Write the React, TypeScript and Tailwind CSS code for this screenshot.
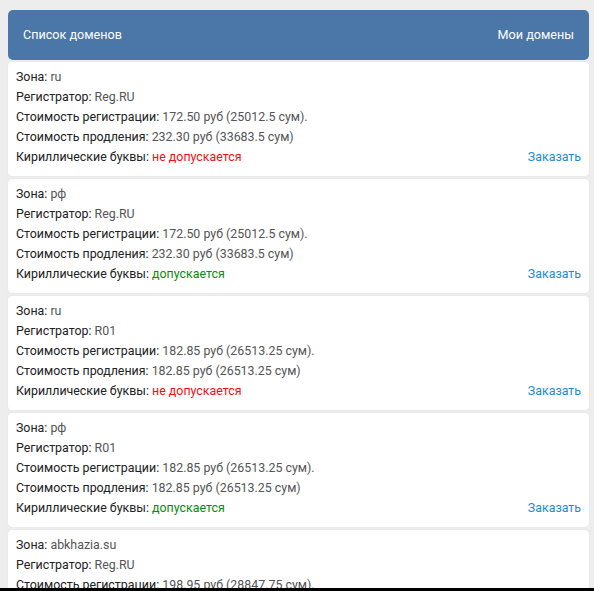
import React from "react";

type Item = { zone: string; reg: string; price: string; renew: string; cyr: boolean };

const items: Item[] = [
  { zone: "ru", reg: "Reg.RU", price: "172.50 руб (25012.5 сум).", renew: "232.30 руб (33683.5 сум)", cyr: false },
  { zone: "рф", reg: "Reg.RU", price: "172.50 руб (25012.5 сум).", renew: "232.30 руб (33683.5 сум)", cyr: true },
  { zone: "ru", reg: "R01", price: "182.85 руб (26513.25 сум).", renew: "182.85 руб (26513.25 сум)", cyr: false },
  { zone: "рф", reg: "R01", price: "182.85 руб (26513.25 сум).", renew: "182.85 руб (26513.25 сум)", cyr: true },
  { zone: "abkhazia.su", reg: "Reg.RU", price: "198.95 руб (28847.75 сум).", renew: "198.95 руб (28847.75 сум)", cyr: false },
];

function Row({ label, children }: { label: string; children: React.ReactNode }) {
  return (
    <div className="h-5 leading-5 whitespace-nowrap">
      <span className="text-[#222]">{label}: </span>
      <span className="text-[#555]">{children}</span>
    </div>
  );
}

export default function App() {
  return (
    <div
      className="bg-[#ededed] pt-[10px] pl-2 pr-[5px] text-[12.4px] overflow-hidden h-[591px]"
      style={{ fontFamily: "Roboto, 'Noto Sans', sans-serif" }}
    >
      <div className="h-[50px] bg-[#4a76a8] rounded-[5px] flex items-center justify-between pl-[15px] pr-[15px] text-[12.6px] text-white">
        <span>Список доменов</span>
        <span>Мои домены</span>
      </div>
      <div className="flex flex-col gap-[3px] mt-[2px]">
        {items.map((it, i) => (
          <div key={i} className="bg-white rounded-[4px] pl-2 pr-2 pt-[5px] pb-[9px] shadow-[0_0_1px_rgba(0,0,0,0.12)]">
            <Row label="Зона">{it.zone}</Row>
            <Row label="Регистратор">{it.reg}</Row>
            <Row label="Стоимость регистрации">{it.price}</Row>
            <Row label="Стоимость продления">{it.renew}</Row>
            <div className="flex justify-between h-5 leading-5 whitespace-nowrap">
              <div>
                <span className="text-[#222]">Кириллические буквы: </span>
                {it.cyr ? (
                  <span className="text-[#0a8a0a]">допускается</span>
                ) : (
                  <span className="text-[#f01010]">не допускается</span>
                )}
              </div>
              <span className="text-[#1e8ad2]">Заказать</span>
            </div>
          </div>
        ))}
      </div>
      <div className="fixed left-0 right-0 bottom-0 h-[3px] bg-black" />
    </div>
  );
}
